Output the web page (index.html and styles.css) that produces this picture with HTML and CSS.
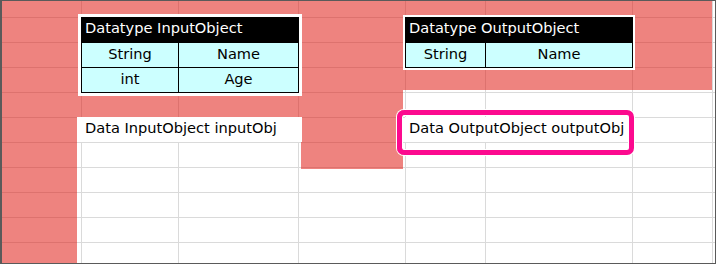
FILE: index.html
```html
<!DOCTYPE html>
<html lang="en">
<head>
    <meta charset="UTF-8">
    <meta name="viewport" content="width=device-width, initial-scale=1.0">
    <title>Data objects</title>
    <link rel="stylesheet" href="styles.css">
</head>
<body>
    <div class="sheet">
        <!-- highlighted area behind the objects -->
        <svg class="mark" width="716" height="264" viewBox="0 0 716 264">
            <polygon points="0,0 712,0 712,90 403,90 403,169 301,169 301,117 77,117 77,263 0,263" />
        </svg>

        <div class="type type-in">
            <div class="type-head">Datatype InputObject</div>
            <div class="type-cell">String</div>
            <div class="type-cell">Name</div>
            <div class="type-cell">int</div>
            <div class="type-cell">Age</div>
        </div>

        <div class="type type-out">
            <div class="type-head">Datatype OutputObject</div>
            <div class="type-cell">String</div>
            <div class="type-cell">Name</div>
        </div>

        <div class="decl decl-in">Data InputObject inputObj</div>
        <div class="decl decl-out">Data OutputObject outputObj<span class="callout"></span></div>
    </div>
</body>
</html>
```

FILE: styles.css
```css
body {
    margin: 0;
    background-color: #fff;
    font-family: "DejaVu Sans", Verdana, sans-serif;
    font-size: 14.6px;
    color: #000;
}

/* worksheet: column widths include the grid line on their right edge */
.sheet {
    --line: #dadada;
    position: relative;
    width: 716px;
    height: 264px;
    box-sizing: border-box;
    border: 1px solid #5a5a5a;
    border-left-width: 2px;
    display: grid;
    grid-template-columns: 80px 97px 120px 107px 80px 147px 80px 2px;
    grid-template-rows: 17px repeat(9, 25px) 20px;
    overflow: hidden;
    background-color: #fff;
    background-image:
        linear-gradient(var(--line), var(--line)),
        linear-gradient(var(--line), var(--line)),
        linear-gradient(var(--line), var(--line)),
        linear-gradient(var(--line), var(--line)),
        linear-gradient(var(--line), var(--line)),
        linear-gradient(var(--line), var(--line)),
        linear-gradient(var(--line), var(--line)),
        linear-gradient(var(--line) 1px, transparent 1px);
    background-size: 1px 100%, 1px 100%, 1px 100%, 1px 100%, 1px 100%, 1px 100%, 1px 100%, 100% 25px;
    background-position: 79px 0, 176px 0, 296px 0, 403px 0, 483px 0, 630px 0, 710px 0, 0 16px;
    background-repeat: no-repeat, no-repeat, no-repeat, no-repeat, no-repeat, no-repeat, no-repeat, repeat-y;
}

.mark {
    position: absolute;
    top: -1px;
    left: -2px;
    z-index: 1;
}
.mark polygon {
    fill: rgba(224, 30, 22, 0.55);
}

/* datatype tables */
.type {
    position: relative;
    z-index: 2;
    display: grid;
    grid-auto-rows: 24px;
    gap: 1px;
    margin: -1px 0 0 -1px;
    border: 1px solid #000;
    background-color: #000;
}
.type-in {
    grid-column: 2 / 4;
    grid-row: 2 / 5;
    grid-template-columns: 96px 1fr;
    box-shadow: 0 0 0 3px #fff;
}
.type-out {
    grid-column: 5 / 7;
    grid-row: 2 / 4;
    grid-template-columns: 79px 1fr;
    box-shadow: 0 0 0 2px #fff;
}
.type-head {
    grid-column: span 2;
    padding-left: 3px;
    color: #fff;
    line-height: 20px;
    white-space: nowrap;
}
.type-cell {
    background-color: #ccffff;
    text-align: center;
    line-height: 22px;
}

/* data declarations */
.decl {
    position: relative;
    z-index: 2;
    align-self: start;
    height: 25px;
    margin-top: -1px;
    padding-left: 3px;
    background-color: #fff;
    line-height: 22px;
    white-space: nowrap;
}
.decl-in {
    grid-column: 2 / 4;
    grid-row: 6;
    box-shadow: -5px 0 0 #fff, 3px 0 0 #fff;
}
.decl-out {
    grid-column: 5 / 7;
    grid-row: 6;
    box-shadow: -1px 0 0 #fff;
}

.callout {
    position: absolute;
    top: -7px;
    left: -9px;
    width: 237px;
    height: 45px;
    box-sizing: border-box;
    border: 5px solid #fc0a8f;
    border-radius: 7px;
    box-shadow: 0 0 0 1px #fff, inset 0 0 0 1px #fff;
}
```
